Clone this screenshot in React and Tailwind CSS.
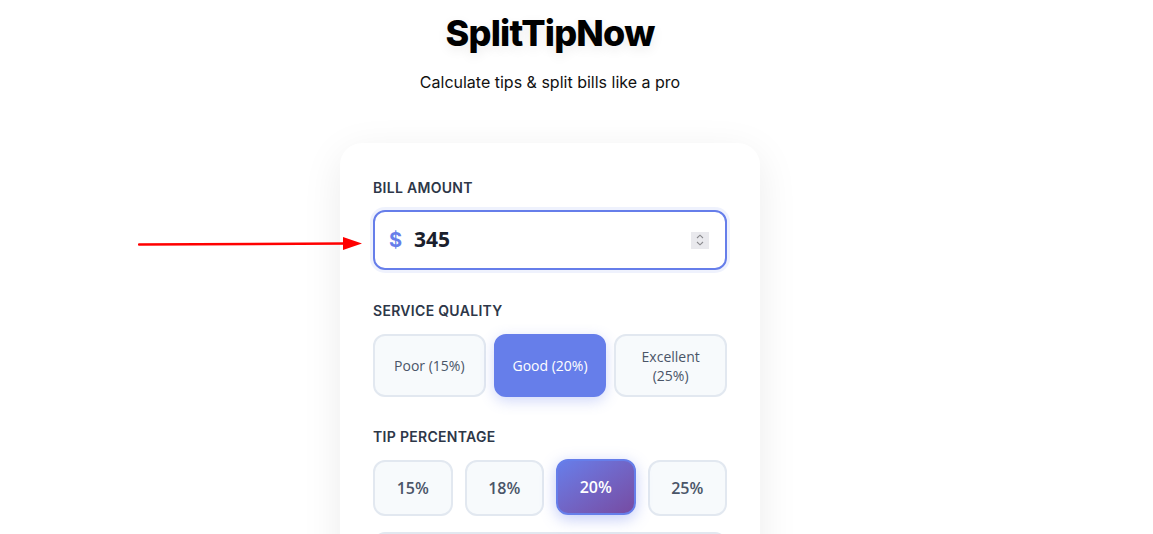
import { useState } from "react";

const QUALITY = [
  { label: "Poor (15%)", value: 15 },
  { label: "Good (20%)", value: 20 },
  { label: "Excellent (25%)", value: 25 },
];

const TIPS = [15, 18, 20, 25];

export default function App() {
  const [bill, setBill] = useState("345");
  const [quality, setQuality] = useState(20);
  const [tip, setTip] = useState(20);

  return (
    <div className="relative min-h-screen bg-white font-['Inter',sans-serif] text-black">
      <div className="w-[1100px]">
        <header className="pt-[13px] text-center">
          <h1 className="text-4xl leading-10 font-extrabold tracking-[-0.8px] [text-shadow:0_4px_12px_rgba(0,0,0,0.08)]">
            SplitTipNow
          </h1>
          <p className="mt-[17px] text-base leading-6 text-[#111]">Calculate tips &amp; split bills like a pro</p>
        </header>

        <main className="mx-auto mt-[49px] w-[420px] rounded-[22px] bg-white px-[33px] pt-[35px] pb-[33px] shadow-[0_10px_40px_rgba(0,0,0,0.08)]">
          {/* Bill amount */}
          <Label>Bill Amount</Label>
          <div className="mt-3 flex h-[60px] items-center rounded-xl border-2 border-[#667eea] pl-[14px] pr-4 ring-[3px] ring-[#667eea]/10">
            <span className="text-xl font-bold text-[#667eea]">$</span>
            <input
              type="text"
              value={bill}
              onChange={(e) => setBill(e.target.value)}
              className="ml-3 min-w-0 flex-1 bg-transparent font-['Open_Sans',sans-serif] text-[21px] font-bold text-[#1a202c] outline-none"
            />
            <Spinner />
          </div>

          {/* Service quality */}
          <div className="mt-[31px]">
            <Label>Service Quality</Label>
            <div className="mt-[13px] grid grid-cols-3 gap-2">
              {QUALITY.map((q) => (
                <button
                  key={q.value}
                  onClick={() => setQuality(q.value)}
                  className={
                    quality === q.value
                      ? "flex h-[63px] items-center justify-center rounded-xl border-2 border-[#667eea] bg-[#667eea] px-3 font-['Open_Sans',sans-serif] text-sm leading-[19px] text-white shadow-[0_4px_14px_rgba(102,126,234,0.3)]"
                      : "flex h-[63px] items-center justify-center rounded-xl border-2 border-[#e2e8f0] bg-[#f7fafc] px-3 font-['Open_Sans',sans-serif] text-sm leading-[19px] text-[#4a5568]"
                  }
                >
                  {q.label}
                </button>
              ))}
            </div>
          </div>

          {/* Tip percentage */}
          <div className="mt-[30px]">
            <Label>Tip Percentage</Label>
            <div className="mt-[13px] grid grid-cols-4 gap-3">
              {TIPS.map((t) => (
                <button
                  key={t}
                  onClick={() => setTip(t)}
                  className={
                    tip === t
                      ? "h-[56px] -translate-y-px rounded-xl border-2 border-[#667eea] bg-gradient-to-br from-[#667eea] to-[#764ba2] font-['Open_Sans',sans-serif] text-base font-semibold text-white shadow-[0_4px_15px_rgba(102,126,234,0.4)]"
                      : "h-[56px] rounded-xl border-2 border-[#e2e8f0] bg-[#f7fafc] font-['Open_Sans',sans-serif] text-base font-semibold text-[#4a5568]"
                  }
                >
                  {t}%
                </button>
              ))}
            </div>
            <input
              type="text"
              placeholder="Custom tip %"
              className="mt-4 h-[56px] w-full rounded-xl border-2 border-[#e2e8f0] px-4 font-['Open_Sans',sans-serif] text-base outline-none"
            />
          </div>
        </main>
      </div>

      {/* annotation arrow */}
      <svg className="absolute left-[138px] top-[236px]" width="226" height="16" viewBox="0 0 226 16">
        <line x1="1" y1="8.5" x2="208" y2="7.5" stroke="#ff0000" strokeWidth="2.5" strokeLinecap="round" />
        <polygon points="205,1 224,7.5 205,14" fill="#ff0000" />
      </svg>
    </div>
  );
}

function Label({ children }) {
  return (
    <p className="text-sm leading-5 font-semibold uppercase tracking-[0.3px] text-[#2d3748]">{children}</p>
  );
}

function Spinner() {
  return (
    <span className="flex h-[17px] w-[18px] flex-col items-center justify-center bg-[#e9e9ed]">
      <svg width="10" height="14" viewBox="0 0 10 14" fill="none" stroke="#8a8a8e" strokeWidth="1.1">
        <path d="M2 5 L5 2.2 L8 5" />
        <path d="M2 9 L5 11.8 L8 9" />
      </svg>
    </span>
  );
}
